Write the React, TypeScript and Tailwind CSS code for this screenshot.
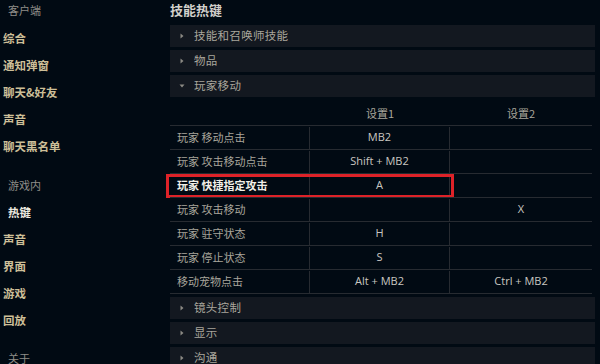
import React from "react";

const FONT = { fontFamily: '"Noto Sans CJK SC", "Noto Sans", sans-serif' };
const KEY_FONT = { fontFamily: '"Open Sans", "Noto Sans", sans-serif' };

const clientItems = ["综合", "通知弹窗", "聊天&好友", "声音", "聊天黑名单"];
const gameItems = ["热键", "声音", "界面", "游戏", "回放"];

const rows: { label: string; k1: string; k2: string; active?: boolean }[] = [
  { label: "玩家 移动点击", k1: "MB2", k2: "" },
  { label: "玩家 攻击移动点击", k1: "Shift + MB2", k2: "" },
  { label: "玩家 快捷指定攻击", k1: "A", k2: "", active: true },
  { label: "玩家 攻击移动", k1: "", k2: "X" },
  { label: "玩家 驻守状态", k1: "H", k2: "" },
  { label: "玩家 停止状态", k1: "S", k2: "" },
  { label: "移动宠物点击", k1: "Alt + MB2", k2: "Ctrl + MB2" },
];

function Caret({ open }: { open?: boolean }) {
  return (
    <svg width="6" height="6" viewBox="0 0 6 6" className="shrink-0">
      {open ? (
        <path d="M0.5 1.5 L5.5 1.5 L3 4.5 Z" fill="#8c8a84" />
      ) : (
        <path d="M1.5 0.5 L4.5 3 L1.5 5.5 Z" fill="#8c8a84" />
      )}
    </svg>
  );
}

function Section({ title, open }: { title: string; open?: boolean }) {
  return (
    <div className="h-[22px] w-[425px] bg-[#131820] flex items-center pl-[9px] gap-[9px] pt-[1px]">
      <Caret open={open} />
      <span className="text-[11.5px] text-[#a9a69c] tracking-[0.3px]">{title}</span>
    </div>
  );
}

export default function App() {
  return (
    <div className="w-[600px] h-[364px] overflow-hidden bg-[#010a13] flex" style={FONT}>
      {/* sidebar */}
      <div className="w-[170px] shrink-0 flex flex-col pt-[2px]">
        <div className="h-[18px] flex items-center pl-[8px] text-[11px] text-[#8f8d88]">客户端</div>
        <div className="mt-[6.5px] flex flex-col">
          {clientItems.map((t) => (
            <div key={t} className="h-[27px] flex items-center pl-[3px] text-[11.5px] font-bold text-[#cdbf98]">
              {t}
            </div>
          ))}
        </div>
        <div className="mt-[16.5px] h-[18px] flex items-center pl-[8px] text-[11px] text-[#8f8d88]">游戏内</div>
        <div className="mt-[6.5px] flex flex-col">
          {gameItems.map((t, i) => (
            <div
              key={t + i}
              className={
                i === 0
                  ? "h-[27px] flex items-center pl-[8px] text-[11.5px] font-bold text-[#eeeae0]"
                  : "h-[27px] flex items-center pl-[3px] text-[11.5px] font-bold text-[#cdbf98]"
              }
            >
              {t}
            </div>
          ))}
        </div>
        <div className="mt-[15.5px] h-[18px] flex items-center pl-[8px] text-[11px] text-[#8f8d88]">关于</div>
      </div>

      {/* main */}
      <div className="flex flex-col">
        <div className="h-[20px] flex items-center text-[13px] font-bold text-[#d2d0cb]">技能热键</div>
        <div className="mt-[5px] flex flex-col gap-[3px]">
          <Section title="技能和召唤师技能" />
          <Section title="物品" />
          <Section title="玩家移动" open />
        </div>

        <div className="w-[422px]">
          <div className="h-[28px] pt-[5px] flex items-center text-[11px] text-[#a9a69c]">
            <div className="w-[140px]" />
            <div className="w-[140px] text-center">设置1</div>
            <div className="w-[142px] text-center">设置2</div>
          </div>
          <div className="border-b border-[#272b31]">
            {rows.map((r) => (
              <div key={r.label} className="relative h-[24px] border-t border-[#272b31] flex text-[11px] pt-[1px]">
                <div
                  className={
                    r.active
                      ? "w-[140px] flex items-center pl-[7px] font-bold text-[#f2efe8] border-r border-[#272b31]"
                      : "w-[140px] flex items-center pl-[7px] text-[#a9a69c] border-r border-[#272b31]"
                  }
                >
                  {r.label}
                </div>
                <div
                  className="w-[140px] flex items-center justify-center text-[#c9c7c1] border-r border-[#272b31]"
                  style={KEY_FONT}
                >
                  {r.k1}
                </div>
                <div className="w-[142px] flex items-center justify-center text-[#c9c7c1]" style={KEY_FONT}>
                  {r.k2}
                </div>
                {r.active && (
                  <div className="absolute left-[-4px] top-0 w-[288px] h-[24px] border-[3px] border-[#de2228] pointer-events-none" />
                )}
              </div>
            ))}
          </div>
        </div>

        <div className="mt-[3px] flex flex-col gap-[3px]">
          <Section title="镜头控制" />
          <Section title="显示" />
          <Section title="沟通" />
        </div>
      </div>
    </div>
  );
}
